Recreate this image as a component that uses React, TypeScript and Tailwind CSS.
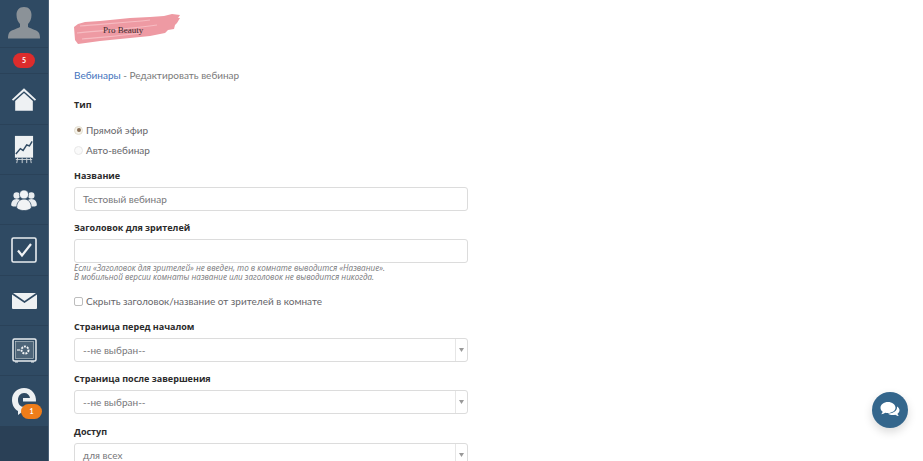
import React from "react";

const Row = ({ h, children }: { h: string; children: React.ReactNode }) => (
  <div className={`${h} flex items-center justify-center border-b border-[#2a4259]`}>{children}</div>
);

const Avatar = () => (
  <svg width="34" height="34" viewBox="0 0 34 34" className="mt-[-2px]">
    <path d="M17 1c-5 0-7.500 3.500-7.500 8 0 4 1.500 7 3.500 9v3c-3 2-9.500 3-11 6-.8 1.700-1 3.500-1 5.500h32c0-2-.2-3.800-1-5.500-1.500-3-8-4-11-6v-3c2-2 3.500-5 3.500-9 0-4.500-2.500-8-7.500-8z" fill="#8b9298" />
  </svg>
);

const Home = () => (
  <svg width="26" height="25" viewBox="0 0 28 26">
    <path d="M14 1 1 13l1.300 1.400L14 4l11.700 10.400L27 13z" fill="#eef1f3" />
    <path d="M4.500 14.500 14 6l9.500 8.500V25h-19z" fill="#eef1f3" />
  </svg>
);

const Chart = () => (
  <svg width="20" height="29" viewBox="0 0 22 32">
    <rect x="1" y="1" width="20" height="24" fill="#eef1f3" />
    <path d="M2 21l5-6 3 2 4-6 3 1 3-5" fill="none" stroke="#2f4a63" strokeWidth="1.600" />
    <path d="M4 25l-1 6M9 25v6M14 25v6M18 25l1 6M2 27h18" stroke="#d4d9dd" strokeWidth="1" />
  </svg>
);

const Users = () => (
  <svg width="26" height="22" viewBox="0 0 28 24">
    <circle cx="6" cy="7" r="3.500" fill="#e9edf0" />
    <circle cx="22" cy="7" r="3.500" fill="#e9edf0" />
    <path d="M0 18c0-4 2-7 6-7s6 3 6 7l-3 1H2z" fill="#e9edf0" />
    <path d="M16 18c0-4 2-7 6-7s6 3 6 7l-2 1h-7z" fill="#e9edf0" />
    <circle cx="14" cy="6" r="5" fill="#f1f3f5" stroke="#2f4a63" strokeWidth=".8" />
    <path d="M6 20c0-5 3-9 8-9s8 4 8 9c0 2-4 3.500-8 3.500S6 22 6 20z" fill="#f1f3f5" stroke="#2f4a63" strokeWidth=".8" />
  </svg>
);

const Check = () => (
  <svg width="26" height="26" viewBox="0 0 26 26">
    <rect x="1" y="1" width="24" height="24" rx="1.500" fill="none" stroke="#e9edf0" strokeWidth="1.600" />
    <path d="M7 13.500l4 5L20 7" fill="none" stroke="#f1f3f5" strokeWidth="2.200" />
  </svg>
);

const Mail = () => (
  <svg width="25" height="16" viewBox="0 0 25 16">
    <path d="M1 0h23l-11.500 8z" fill="#eef1f3" />
    <path d="M0 1.500l12.500 8.500L25 1.500V15a1 1 0 0 1-1 1H1a1 1 0 0 1-1-1z" fill="#eef1f3" />
  </svg>
);

const Safe = () => (
  <svg width="25" height="25" viewBox="0 0 25 25">
    <rect x="1" y="1" width="23" height="22" rx="1.500" fill="#2f4a63" stroke="#e9edf0" strokeWidth="1.500" />
    <rect x="3.500" y="3.500" width="18" height="17" fill="#4d6478" stroke="#c9d0d6" strokeWidth=".6" />
    <circle cx="13" cy="12" r="3.500" fill="none" stroke="#f1f3f5" strokeWidth="2" strokeDasharray="2 1" />
    <path d="M5 12h3" stroke="#f1f3f5" strokeWidth="1.200" />
    <path d="M3 24h3M19 24h3" stroke="#e9edf0" strokeWidth="1" />
  </svg>
);

const Brand = () => (
  <svg width="26" height="29" viewBox="0 0 26 29">
    <path d="M13 1C6 1 1 6 1 13c0 5 2.500 9 6 11v4l4-3h3v-5h-1c-4 0-6-3-6-7s2.500-7 6-7 5.500 2 6 5h-7v3.500h13C25.500 7 20.500 1 13 1z" fill="#eef1f3" />
  </svg>
);

const Field = ({ label, children }: { label: string; children: React.ReactNode }) => (
  <div className="flex flex-col">
    <label className="h-[13px] font-['Open_Sans',sans-serif] text-[9px] leading-[13px] font-bold text-[#2b2b2b]">{label}</label>
    {children}
  </div>
);

const Select = ({ value }: { value: string }) => (
  <div className="mt-[5px] flex h-[24px] w-[394px] items-center rounded-[3px] border border-[#dcdcdc] bg-white">
    <span className="flex-1 pl-[8px] text-[10px] text-[#77777a]">{value}</span>
    <span className="flex h-full w-[12px] items-center justify-center border-l border-[#e6e6e6]">
      <svg width="5" height="4" viewBox="0 0 5 4"><path d="M0 0h5L2.500 4z" fill="#999" /></svg>
    </span>
  </div>
);

export default function App() {
  return (
    <div className="flex h-[461px] w-[923px] overflow-hidden bg-white font-['Lato','Roboto',sans-serif]">
      <aside className="flex h-full w-[49px] shrink-0 flex-col border-r border-[#4a6076] bg-[#2f4a63]">
        <Row h="h-[48px]"><Avatar /></Row>
        <Row h="h-[26px]">
          <span className="flex h-[15px] w-[22px] items-center justify-center rounded-full bg-[#dd2c2c] text-[7px] font-bold text-white">5</span>
        </Row>
        <Row h="h-[51px]"><Home /></Row>
        <Row h="h-[50px]"><Chart /></Row>
        <Row h="h-[50px]"><Users /></Row>
        <Row h="h-[51px]"><Check /></Row>
        <Row h="h-[50px]"><Mail /></Row>
        <Row h="h-[50px]"><Safe /></Row>
        <div className="relative flex h-[50px] items-center justify-center">
          <Brand />
          <span className="absolute left-[21px] top-[28px] flex h-[15px] w-[21px] items-center justify-center rounded-full bg-[#ee7d1a] text-[7px] font-bold text-white">1</span>
        </div>
        <div className="flex-1 bg-[#2a4056]" />
      </aside>

      <main className="flex-1 pl-[25px]">
        <div className="relative mt-[13px] h-[32px] w-[110px]">
          <svg width="110" height="32" viewBox="0 0 110 32" className="absolute left-0 top-0">
            <path d="M0 14 4 11 11 9 26 8 56 5 76 4 90 3 98 1 106 2 104 5 106 5 103 10 101 12 100 16 94 17 91 20 76 23 56 25 26 28 4 31 1 27z" fill="#ee9aa3" />
            <path d="M6 13c20-2 45-3 70-6M3 20c20-2 50-4 80-8M8 26c20-2 40-3 58-6" stroke="#f6bcc2" strokeWidth="1.200" fill="none" />
          </svg>
          <span className="absolute left-[29px] top-[11px] font-['Liberation_Serif',serif] text-[9px] leading-[12px] text-[#3a2a2d]">Pro Beauty</span>
        </div>

        <div className="mt-[23px] h-[14px] text-[10px] leading-[14px] text-[#7a7a7a]">
          <span className="text-[#3f73bd]">Вебинары</span> - Редактировать вебинар
        </div>

        <div className="mt-[16px] h-[13px] font-['Open_Sans',sans-serif] text-[9px] leading-[13px] font-bold text-[#2b2b2b]">Тип</div>

        <div className="mt-[12px] flex h-[14px] items-center text-[10px] text-[#66666a]">
          <span className="mr-[3px] flex h-[9px] w-[9px] items-center justify-center rounded-full border border-[#e2ddd0] bg-[#f6f3ea]">
            <span className="h-[4px] w-[4px] rounded-full bg-[#8a6f55]" />
          </span>
          Прямой эфир
        </div>
        <div className="mt-[6px] flex h-[14px] items-center text-[10px] text-[#66666a]">
          <span className="mr-[3px] h-[9px] w-[9px] rounded-full border border-[#e8e8e8] bg-[#fafafa]" />
          Авто-вебинар
        </div>

        <div className="mt-[12px]">
          <Field label="Название">
            <div className="mt-[5px] flex h-[24px] w-[394px] items-center rounded-[3px] border border-[#dcdcdc] bg-white pl-[8px] text-[10px] text-[#77777a]">
              Тестовый вебинар
            </div>
          </Field>
        </div>

        <div className="mt-[10px]">
          <Field label="Заголовок для зрителей">
            <div className="mt-[5px] h-[24px] w-[394px] rounded-[3px] border border-[#dcdcdc] bg-white" />
          </Field>
          <p className="mt-[1px] font-['Open_Sans',sans-serif] text-[8.100px] leading-[8.500px] text-[#77777a] italic">
            Если «Заголовок для зрителей» не введен, то в комнате выводится «Название».
            <br />
            В мобильной версии комнаты название или заголовок не выводится никогда.
          </p>
        </div>

        <div className="mt-[13px] flex h-[14px] items-center text-[10px] text-[#66666a]">
          <span className="mr-[3px] h-[9px] w-[9px] rounded-[2px] border border-[#bdbdbd] bg-white" />
          Скрыть заголовок/название от зрителей в комнате
        </div>

        <div className="mt-[12px]">
          <Field label="Страница перед началом"><Select value="--не выбран--" /></Field>
        </div>
        <div className="mt-[10px]">
          <Field label="Страница после завершения"><Select value="--не выбран--" /></Field>
        </div>
        <div className="mt-[11px]">
          <Field label="Доступ"><Select value="для всех" /></Field>
        </div>
      </main>

      <button className="fixed left-[872px] top-[392px] flex h-[36px] w-[36px] items-center justify-center rounded-full bg-[#34668c] shadow-[0_4px_10px_rgba(0,0,0,0.15)]">
        <svg width="20" height="18" viewBox="0 0 20 18">
          <path d="M8 1C3.800 1 .5 3.500.5 6.700c0 1.600.8 3 2.200 4-.2 1-.8 1.800-1.500 2.500 1.500-.1 3-.7 4-1.500.9.200 1.800.3 2.800.3 4.200 0 7.500-2.500 7.500-5.300C15.500 3.500 12.200 1 8 1z" fill="#fff" />
          <path d="M17 5.500c1.600 1 2.500 2.300 2.500 3.800 0 1.300-.8 2.600-2 3.500.2.900.7 1.600 1.300 2.200-1.300-.1-2.600-.6-3.500-1.300-.8.200-1.600.3-2.400.3-2 0-3.800-.6-5-1.600 5 .3 9.800-2.600 9.100-6.900z" fill="#fff" />
        </svg>
      </button>
    </div>
  );
}
